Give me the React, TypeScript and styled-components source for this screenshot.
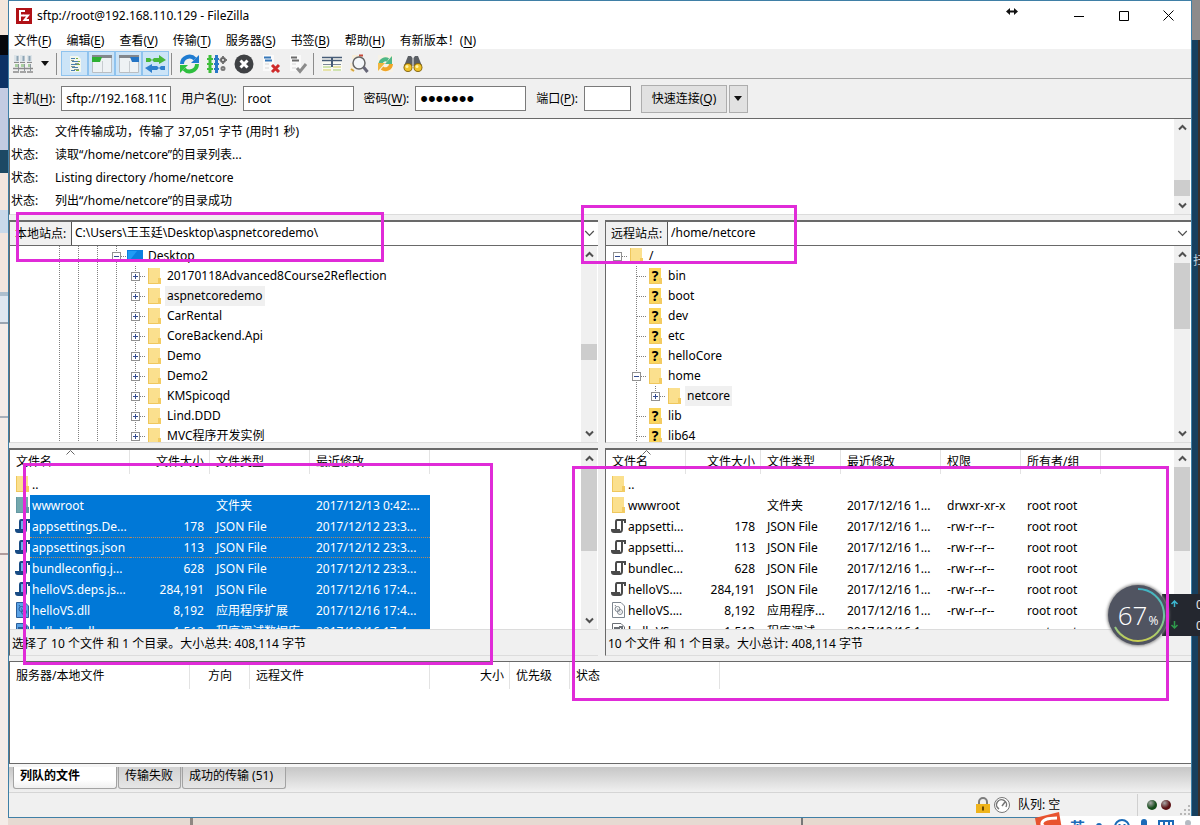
import React from 'react';
import styled, { createGlobalStyle, css } from 'styled-components';

const LINE = '#696969';
const FACE = '#f0f0f0';
const MARK = '#e02bd8';

const Global = createGlobalStyle`
  * { box-sizing: border-box; }
  html, body { margin: 0; height: 100%; }
  body {
    font: 12px/16px "Noto Sans", "Noto Sans CJK SC", sans-serif;
    color: #000;
    overflow: hidden;
  }
  button, input, table { font: inherit; color: inherit; }
  button { border: 0; padding: 0; background: none; }
  u { text-underline-offset: 2px; }
`;

/* ---------- desktop and window frame ---------- */

const Desktop = styled.div`
  position: relative;
  height: 100vh;
  padding: 0 8px 7px;
  overflow: hidden;
  background:
    linear-gradient(#8d8b8b 0 40px, transparent 40px) right / 8px 100% no-repeat,
    linear-gradient(to right, #17405f 6px, #3b302c 6px) right / 8px 100% no-repeat,
    linear-gradient(#f3e6dc 0 35px, #05070c 35px 55px, #0c3265 55px 88px, #c3cbe2 88px 150px,
      #1d4964 150px 173px, #f2e5de 173px 210px, #c9d9ea 210px 233px, #f2e5de 233px 292px,
      #aebfce 292px 296px, #dfe7f0 296px 322px, #9aa4b0 322px 324px, #f4ece8 324px 416px,
      #a8b0ba 416px 418px, #f4ece8 418px 553px, #b09c9c 553px 555px, #f4ece8 555px) left / 8px 100% no-repeat,
    linear-gradient(to right, transparent 190px, #8f8782 190px 193px, transparent 193px 801px,
      #777 801px 803px, #e6d9cf 803px) bottom / 100% 7px no-repeat,
    #e6dad2;
`;

const Window = styled.main`
  display: flex;
  flex-direction: column;
  height: 100%;
  background: ${FACE};
  border: 1px solid #3f7fa6;
`;

const TitleBar = styled.header`
  display: flex;
  align-items: center;
  flex: none;
  height: 29px;
  padding-left: 7px;
  gap: 5px;
  background: #fff;
`;

const Title = styled.h1`
  flex: 1;
  margin: 0;
  font-size: 12px;
  line-height: 16px;
  font-weight: 400;
`;

const Captions = styled.div`
  display: flex;
`;

const Caption = styled.button`
  display: grid;
  place-items: center;
  width: 45px;
  height: 29px;
`;

const MenuBar = styled.nav`
  display: flex;
  flex: none;
  align-items: flex-end;
  height: 19px;
  background: #fff;
`;

const MenuItem = styled.button`
  padding: 0 0 0 5px;
  margin-right: 10px;
  white-space: nowrap;
`;

const ToolBar = styled.div`
  display: flex;
  align-items: center;
  flex: none;
  height: 30px;
  border-bottom: 1px solid #a0a0a0;
`;

const Tool = styled.button<{ $on?: boolean; $slim?: boolean }>`
  display: grid;
  place-items: center;
  width: ${(p) => (p.$slim ? 18 : 27)}px;
  height: 25px;
  ${(p) => p.$on && css`background: #cce4f7; border: 1px solid #8fc3ee;`}
`;

const ToolSep = styled.span`
  width: 1px;
  height: 22px;
  margin: 0 4px 0 2px;
  background: #8c8c8c;
`;

/* ---------- quick connect ---------- */

const QuickBar = styled.form`
  display: flex;
  align-items: center;
  flex: none;
  height: 40px;
  padding: 0 3px;
  gap: 10px;
  border-bottom: 1px solid ${LINE};
`;

const Field = styled.label`
  display: flex;
  align-items: center;
  gap: 6px;
  white-space: nowrap;
`;

const TextBox = styled.input<{ $w: number }>`
  width: ${(p) => p.$w}px;
  height: 25px;
  padding: 0 4px;
  background: #fff;
  border: 1px solid #7a7a7a;
  outline: 0;

  &[type='password'] { font: 22px/22px "Liberation Sans", sans-serif; }
`;

const ConnectGroup = styled.div`
  display: flex;
  gap: 2px;
`;

const PushButton = styled.button<{ $w: number }>`
  display: grid;
  place-items: center;
  width: ${(p) => p.$w}px;
  height: 28px;
  background: #e1e1e1;
  border: 1px solid #adadad;
`;

/* ---------- scroll bar ---------- */

const Track = styled.div`
  display: flex;
  flex-direction: column;
  flex: none;
  width: 17px;
  background: ${FACE};
  border-right: 1px solid #fff;
`;

const ScrollEnd = styled.button`
  display: grid;
  place-items: center;
  height: 17px;
`;

const Rail = styled.div<{ $before: number; $after: number }>`
  display: grid;
  flex: 1;
  min-height: 0;
  grid-template-rows: ${(p) => p.$before}fr minmax(16px, ${(p) => 100 - p.$before - p.$after}fr) ${(p) => p.$after}fr;
`;

const Thumb = styled.div`
  grid-row: 2;
  background: #cdcdcd;
`;

function Chevron({ up, size = 9 }: { up?: boolean; size?: number }) {
  return (
    <svg width={size} height={size} viewBox="0 0 9 9" fill="none" stroke="#505050" strokeWidth={size > 9 ? 1 : 2}>
      <path d={up ? 'M1 6.5 4.5 3 8 6.5' : 'M1 2.5 4.5 6 8 2.5'} />
    </svg>
  );
}

function ScrollBar({ before, after }: { before: number; after: number }) {
  return (
    <Track>
      <ScrollEnd aria-label="向上滚动"><Chevron up /></ScrollEnd>
      <Rail $before={before} $after={after}><Thumb /></Rail>
      <ScrollEnd aria-label="向下滚动"><Chevron /></ScrollEnd>
    </Track>
  );
}

/* ---------- message log ---------- */

const Log = styled.section`
  display: flex;
  flex: 95 1 0;
  min-height: 0;
  background: #fff;
  border-left: 1px solid ${LINE};
  border-bottom: 1px solid #dcdcdc;
`;

const LogLines = styled.div`
  flex: 1;
  overflow: hidden;
  padding: 1px;
`;

const LogLine = styled.p`
  display: grid;
  grid-template-columns: 44px 1fr;
  margin: 0;
  line-height: 23px;
`;

/* ---------- site panes ---------- */

const Split = styled.div<{ $weight: number }>`
  display: grid;
  grid-template-columns: calc(50% - 2px) 1fr;
  grid-template-rows: minmax(0, 1fr);
  column-gap: 7px;
  flex: ${(p) => p.$weight} 1 0;
  min-height: 0;
  margin-top: 5px;
`;

const Pane = styled.section`
  display: flex;
  flex-direction: column;
  min-width: 0;
  background: #fff;
  border: solid ${LINE};
  border-width: 2px 0 0 1px;
  border-bottom: 1px solid #dcdcdc;
`;

const AddressRow = styled.div`
  display: flex;
  height: 24px;
  flex: none;
  border-bottom: 1px solid ${LINE};
`;

const AddressLabel = styled.label`
  width: 62px;
  padding-left: 5px;
  line-height: 23px;
  white-space: nowrap;
  background: ${FACE};
  border-right: 1px solid #555;
`;

const AddressInput = styled.input`
  flex: 1;
  min-width: 0;
  padding: 0 3px;
  border: 0;
  outline: 0;
  background: #fff;
`;

const DropButton = styled.button`
  display: grid;
  place-items: center;
  width: 17px;
`;

const PaneBody = styled.div`
  display: flex;
  flex: 1;
  min-height: 0;
`;

const Tree = styled.ul<{ $pad: number }>`
  flex: 1;
  margin: 0;
  padding: 0 0 0 ${(p) => p.$pad}px;
  overflow: hidden;
  list-style: none;
`;

const TreeRow = styled.li`
  display: flex;
  height: 20px;
  align-items: center;
`;

const TreeLabel = styled.span<{ $on?: boolean }>`
  padding: 0 2px;
  line-height: 20px;
  white-space: nowrap;
  background: ${(p) => (p.$on ? '#f0f0f0' : 'none')};
`;

const IconSlot = styled.span`
  display: grid;
  place-items: center;
  width: 20px;
  height: 20px;
  padding-right: 1px;
`;

type Kind = 'guide' | 'plus' | 'minus' | 'leaf' | 'none' | 'plusFirst' | 'minusMid';

function Branch({ kind }: { kind: Kind }) {
  const box = kind === 'plus' || kind === 'minus' || kind === 'plusFirst' || kind === 'minusMid';
  return (
    <svg width="19" height="20" viewBox="0 0 19 20" fill="none">
      <g stroke="#808080" strokeDasharray="1 1">
        {kind !== 'none' && kind !== 'plusFirst' && kind !== 'minus' && <path d="M9.5 0V20" />}
        {kind === 'plusFirst' && <path d="M9.5 0V6" />}
        {kind !== 'none' && kind !== 'guide' && <path d="M10 10.5H19" />}
      </g>
      {box && (
        <>
          <rect x="5.5" y="6.5" width="8" height="8" fill="#fff" stroke="#919191" />
          <path d="M7 10.5H12" stroke="#334b8f" />
          {(kind === 'plus' || kind === 'plusFirst') && <path d="M9.5 8V13" stroke="#334b8f" />}
        </>
      )}
    </svg>
  );
}

const FolderArt = styled.svg`
  overflow: visible;
`;

function Folder({ unknown, tinted }: { unknown?: boolean; tinted?: boolean }) {
  return (
    <FolderArt width="13" height="16" viewBox="0 0 13 16">
      <path d="M0 0H12V10H13V16H0Z" fill={tinted ? '#73a8ad' : unknown ? '#fbd65c' : '#fbe08e'} />
      <path d="M0 0H1V16H0ZM0 15H13V16H0Z" fill={tinted ? '#6397a3' : '#efc75c'} />
      <path d="M10 10H13V16H10Z" fill={tinted ? '#6397a3' : '#f3cb61'} />
      {unknown && (
        <text x="6" y="13" textAnchor="middle" fontSize="14" fontWeight="700">?</text>
      )}
    </FolderArt>
  );
}

function DesktopIcon() {
  return (
    <svg width="17" height="16" viewBox="0 0 17 16">
      <path d="M0 2H16V13H0Z" fill="#0a7fe0" />
      <path d="M1 3H10L3 12H1Z" fill="#1f9cf5" />
      <path d="M0 13H16V14H0Z" fill="#0761ae" />
    </svg>
  );
}

/* ---------- file lists ---------- */

const ListWrap = styled.div`
  flex: 1;
  min-width: 0;
  overflow: hidden;
`;

const Files = styled.table`
  table-layout: fixed;
  width: 0;
  border-collapse: separate;
  border-spacing: 0;
`;

const Head = styled.th<{ $align?: string }>`
  position: relative;
  height: 24px;
  padding: 0 5px 0 6px;
  font-weight: 400;
  text-align: ${(p) => p.$align || 'left'};
  white-space: nowrap;
  border-right: 1px solid #e3e3e3;
`;

const SortMark = styled.span`
  position: absolute;
  top: 0;
  left: calc(50% - 4px);
  display: block;
  line-height: 0;
`;

const Cell = styled.td<{ $align?: string }>`
  height: 21px;
  padding: 1px 6px 0;
  white-space: nowrap;
  overflow: hidden;
  text-align: ${(p) => p.$align || 'left'};
`;

const NameCell = styled.td`
  height: 21px;
  padding: 0 0 0 5px;
`;

const NameBox = styled.span`
  display: flex;
  height: 21px;
`;

const NameText = styled.span`
  display: flex;
  align-items: center;
  flex: 1;
  padding: 1px 0 0 2px;
  white-space: nowrap;
`;

const FileIcon = styled.span`
  display: grid;
  place-items: center;
  width: 15px;
`;

const FileRow = styled.tr<{ $selected?: boolean; $focus?: boolean }>`
  ${(p) => p.$selected && css`
    color: #fff;
    ${Cell}, ${NameText} { background: #0078d7; }
  `}
  ${(p) => p.$focus && css`
    ${Cell}, ${NameText} { border: dotted #b98a5c; border-width: 1px 0; }
  `}
`;

const PaneStatus = styled.p`
  flex: none;
  height: 26px;
  margin: 0;
  padding: 0 2px;
  line-height: 27px;
  background: ${FACE};
  border-top: 1px solid #dcdcdc;
`;

function Script({ tinted }: { tinted?: boolean }) {
  const ink = tinted ? '#174b84' : '#4a4a4a';
  return (
    <svg width="15" height="16" viewBox="0 0 15 16" fill="none" stroke={ink} strokeWidth="2">
      <path d="M5 3H11V12H5Z" fill={tinted ? '#6fb1ec' : '#fff'} stroke="none" />
      <path d="M14 5V2H6Q5 2 5 4V11" />
      <path d="M11 3V11Q11 14 9 14H3Q1 14 1 12H8V14" />
    </svg>
  );
}

function Library({ tinted }: { tinted?: boolean }) {
  const ink = tinted ? '#2a5f9b' : '#7f8790';
  return (
    <svg width="13" height="16" viewBox="0 0 13 16" fill="none" stroke={ink}>
      <path d="M.5.5H9L12.500 4V15.500H.5Z" fill={tinted ? '#5aa2e6' : '#fff'} />
      <circle cx="5.500" cy="7" r="2.500" />
      <circle cx="8" cy="10" r="2.500" />
      <path d="M5 7H6M7.500 10H8.500M3 3 4 4.500" />
    </svg>
  );
}

function Database({ tinted }: { tinted?: boolean }) {
  const ink = tinted ? '#2a5f9b' : '#6b6f75';
  return (
    <svg width="13" height="16" viewBox="0 0 13 16" fill="none" stroke={ink}>
      <path d="M.5.5H9L12.500 4V15.500H.5Z" fill={tinted ? '#5aa2e6' : '#fff'} />
      <path d="M3 5H7V9H3ZM7 4H10V8" strokeWidth="2" />
    </svg>
  );
}

type Glyph = 'folder' | 'script' | 'library' | 'database';
type Entry = { icon: Glyph; cells: string[]; selected?: boolean; focus?: boolean };
type Column = { label: string; width: number; align?: string };

function Icon({ kind, tinted }: { kind: Glyph; tinted?: boolean }) {
  if (kind === 'folder') return <Folder tinted={tinted} />;
  if (kind === 'script') return <Script tinted={tinted} />;
  if (kind === 'library') return <Library tinted={tinted} />;
  return <Database tinted={tinted} />;
}

function FileList({ columns, rows }: { columns: Column[]; rows: Entry[] }) {
  return (
    <ListWrap>
      <Files>
        <colgroup>
          {columns.map((c) => <col key={c.label} style={{ width: c.width }} />)}
        </colgroup>
        <thead>
          <tr>
            {columns.map((c, i) => (
              <Head key={c.label} $align={c.align}>
                {c.label}
                {i === 0 && (
                  <SortMark>
                    <svg width="9" height="5" viewBox="0 0 9 5" fill="none" stroke="#666"><path d="M.5 4.500 4.500.5 8.500 4.500" /></svg>
                  </SortMark>
                )}
              </Head>
            ))}
          </tr>
        </thead>
        <tbody>
          {rows.map((r, i) => (
            <FileRow key={i} $selected={r.selected} $focus={r.focus}>
              <NameCell>
                <NameBox>
                  <FileIcon><Icon kind={r.icon} tinted={r.selected} /></FileIcon>
                  <NameText>{r.cells[0]}</NameText>
                </NameBox>
              </NameCell>
              {columns.slice(1).map((c, j) => <Cell key={c.label} $align={c.align}>{r.cells[j + 1]}</Cell>)}
            </FileRow>
          ))}
        </tbody>
      </Files>
    </ListWrap>
  );
}

/* ---------- queue, tabs and status ---------- */

const Queue = styled.section`
  flex: 101 1 0;
  min-height: 0;
  margin-top: 5px;
  overflow: hidden;
  background: #fff;
  border: solid ${LINE};
  border-width: 1px 0 1px 1px;
`;

const QueueHead = styled(Head)`
  height: 27px;
`;

const Tabs = styled.div`
  display: flex;
  flex: none;
  align-items: flex-start;
  gap: 1px;
  height: 29px;
  padding: 0 4px;
  border-top: 3px solid #f6f6f6;
  border-bottom: 1px solid #d5d5d5;
  background: linear-gradient(#c6c6c6, #f0f0f0);
`;

const Tab = styled.button<{ $active?: boolean; $w: number }>`
  width: ${(p) => p.$w}px;
  height: 22px;
  padding: 0 0 2px 6px;
  text-align: left;
  white-space: nowrap;
  font-weight: ${(p) => (p.$active ? 700 : 400)};
  background: ${(p) => (p.$active ? 'linear-gradient(#fff 60%, #f0f0f0)' : 'linear-gradient(#d2d2d2, #e6e6e6)')};
  border: 1px solid #a3a3a3;
  border-top: 0;
  border-radius: 0 0 3px 3px;
`;

const StatusBar = styled.footer`
  display: flex;
  flex: none;
  align-items: center;
  justify-content: flex-end;
  gap: 3px;
  height: 24px;
`;

const QueueState = styled.span`
  width: 121px;
  padding-left: 5px;
`;

const Lamps = styled.span`
  display: flex;
  align-items: center;
  gap: 4px;
  height: 22px;
  padding: 0 0 0 9px;
  border-left: 1px solid #d0d0d0;
`;

const Lamp = styled.span<{ $c: string }>`
  width: 10px;
  height: 10px;
  border-radius: 50%;
  background: radial-gradient(circle at 35% 30%, #a8a8a8, ${(p) => p.$c} 55%);
`;

/* ---------- overlays ---------- */

const Frame = styled.div<{ $x: number; $y: number; $w: number; $h: number }>`
  position: absolute;
  left: ${(p) => p.$x}px;
  top: ${(p) => p.$y}px;
  width: ${(p) => p.$w}px;
  height: ${(p) => p.$h}px;
  border: 3px solid ${MARK};
  pointer-events: none;
`;

const ResizeCursor = styled.span`
  position: absolute;
  top: 7px;
  right: 182px;
  line-height: 0;
`;

const Speed = styled.aside`
  position: absolute;
  top: 594px;
  right: 0;
  display: grid;
  grid-template-columns: 26px 1fr;
  align-items: center;
  width: 38px;
  height: 42px;
  padding-left: 8px;
  line-height: 21px;
  color: #e8e8e8;
  background: #24272f;
  overflow: hidden;
`;

const SpeedArrows = styled.span`
  line-height: 0;
`;

const Ball = styled.div`
  position: absolute;
  top: 585px;
  right: 32px;
  display: flex;
  align-items: center;
  justify-content: center;
  width: 60px;
  height: 60px;
  border-radius: 50%;
  color: #fff;
  font-family: "Open Sans", sans-serif;
  font-size: 26px;
  font-weight: 300;
  background: #505461;
  box-shadow: 0 0 3px 1px #8a8a8a;

  svg { position: absolute; inset: 0; }
  small { font-size: 12px; padding: 12px 0 0 1px; font-weight: 400; }
`;

const EdgeText = styled.span`
  position: absolute;
  top: 253px;
  left: calc(100% - 7px);
  color: #c4d3df;
`;

const ImeBar = styled.div`
  position: absolute;
  right: 0;
  bottom: -12px;
  display: flex;
  align-items: center;
  gap: 11px;
  width: 155px;
  height: 21px;
  padding-left: 25px;
  color: #1c6bb8;
  font-size: 15px;
  font-weight: 700;
  background: #fff;

  svg { flex: none; }
`;

const ImeLogo = styled.span`
  position: absolute;
  left: -10px;
  top: -5px;
  line-height: 0;
`;

/* ---------- data ---------- */

const MENUS: [string, string][] = [
  ['文件', 'F'], ['编辑', 'E'], ['查看', 'V'], ['传输', 'T'],
  ['服务器', 'S'], ['书签', 'B'], ['帮助', 'H'], ['有新版本！', 'N'],
];

const LOG = [
  '文件传输成功，传输了 37,051 字节 (用时1 秒)',
  '读取“/home/netcore”的目录列表...',
  'Listing directory /home/netcore',
  '列出“/home/netcore”的目录成功',
];

const LOCAL_DIRS = [
  '20170118Advanced8Course2Reflection', 'aspnetcoredemo', 'CarRental', 'CoreBackend.Api', 'Demo',
  'Demo2', 'KMSpicoqd', 'Lind.DDD', 'MVC程序开发实例',
];

const REMOTE_DIRS: { name: string; branch: Kind[]; unknown?: boolean; on?: boolean }[] = [
  { name: '/', branch: ['minus'] },
  ...['bin', 'boot', 'dev', 'etc', 'helloCore'].map((name) => ({ name, branch: ['none', 'leaf'] as Kind[], unknown: true })),
  { name: 'home', branch: ['none', 'minusMid'] },
  { name: 'netcore', branch: ['none', 'guide', 'plusFirst'], on: true },
  { name: 'lib', branch: ['none', 'leaf'], unknown: true },
  { name: 'lib64', branch: ['none', 'leaf'], unknown: true },
];

const LOCAL_COLS: Column[] = [
  { label: '文件名', width: 120 }, { label: '文件大小', width: 80, align: 'right' },
  { label: '文件类型', width: 100 }, { label: '最近修改', width: 120 },
];

const REMOTE_COLS: Column[] = [
  { label: '文件名', width: 80 }, { label: '文件大小', width: 75, align: 'right' }, { label: '文件类型', width: 80 },
  { label: '最近修改', width: 100 }, { label: '权限', width: 80 }, { label: '所有者/组', width: 80 },
];

const LOCAL_FILES: Entry[] = [
  { icon: 'folder', cells: ['..'] },
  { icon: 'folder', selected: true, cells: ['wwwroot', '', '文件夹', '2017/12/13 0:42:...'] },
  { icon: 'script', selected: true, cells: ['appsettings.De...', '178', 'JSON File', '2017/12/12 23:3...'] },
  { icon: 'script', selected: true, focus: true, cells: ['appsettings.json', '113', 'JSON File', '2017/12/12 23:3...'] },
  { icon: 'script', selected: true, cells: ['bundleconfig.j...', '628', 'JSON File', '2017/12/12 23:3...'] },
  { icon: 'script', selected: true, cells: ['helloVS.deps.js...', '284,191', 'JSON File', '2017/12/16 17:4...'] },
  { icon: 'library', selected: true, cells: ['helloVS.dll', '8,192', '应用程序扩展', '2017/12/16 17:4...'] },
  { icon: 'database', selected: true, cells: ['helloVS.pdb', '1,512', '程序调试数据库', '2017/12/16 17:4...'] },
];

const owner = ['2017/12/16 1...', '-rw-r--r--', 'root root'];
const REMOTE_FILES: Entry[] = [
  { icon: 'folder', cells: ['..'] },
  { icon: 'folder', cells: ['wwwroot', '', '文件夹', '2017/12/16 1...', 'drwxr-xr-x', 'root root'] },
  { icon: 'script', cells: ['appsetti...', '178', 'JSON File', ...owner] },
  { icon: 'script', cells: ['appsetti...', '113', 'JSON File', ...owner] },
  { icon: 'script', cells: ['bundlec...', '628', 'JSON File', ...owner] },
  { icon: 'script', cells: ['helloVS....', '284,191', 'JSON File', ...owner] },
  { icon: 'library', cells: ['helloVS....', '8,192', '应用程序...', ...owner] },
  { icon: 'database', cells: ['helloVS....', '1,512', '程序调试...', ...owner] },
];

const QUEUE_COLS: Column[] = [
  { label: '服务器/本地文件', width: 180 }, { label: '方向', width: 60, align: 'center' }, { label: '远程文件', width: 180 },
  { label: '大小', width: 80, align: 'right' }, { label: '优先级', width: 60 }, { label: '状态', width: 150 },
];

/* ---------- tool bar drawings ---------- */

const Caret = () => <svg width="8" height="5"><path d="M0 0H8L4 5Z" fill="#111" /></svg>;

const SiteManagerIcon = () => (
  <svg width="20" height="20" viewBox="0 0 20 20">
    <path d="M1 1H6V8H1ZM7 1H12V8H7ZM14 1H19V8H14Z" fill="#dde4e8" />
    <path d="M4.500 2V7M10.500 2V7M16.500 2V7" stroke="#8fa5b5" strokeWidth="2" />
    <path d="M2 10H5V13H2ZM8 10H11V13H8ZM15 10H18V13H15Z" fill="#a9cfa0" />
    <path d="M1 8.500H6M7 8.500H12M14 8.500H19" stroke="#8b8b8b" />
    <path d="M5.500 10V17M11.500 10V17M17.500 10V17" stroke="#8f9aa0" />
    <path d="M0 14.500H20M0 18H6M7 18H13M14 18H20" stroke="#8b8b8b" strokeWidth="1.500" />
  </svg>
);
const LogIcon = () => (
  <svg width="18" height="20" viewBox="0 0 18 20">
    <path d="M4 2H12L15 5V18H4Z" fill="#f3f7ee" />
    <path d="M5 4.500H9M6 7.500H12M5 10.500H11M6 13.500H12M5 16.500H9" stroke="#4a7fae" />
    <path d="M10 4.500H12M12 7.500H14M11 10.500H14M10 16.500H13" stroke="#7fb23d" />
    <path d="M5 6.500H8M9 9.500H13M5 12.500H9M8 15.500H13" stroke="#8a9a8a" />
  </svg>
);
const TreeIcon = ({ right }: { right?: boolean }) => (
  <svg width="20" height="18" viewBox="0 0 20 18">
    <path d="M.5.5H19.500V17.500H.5Z" fill="#eef2f4" stroke="#b9bec3" />
    <path d="M0 0H20V3H0Z" fill="#83878c" />
    {right ? <path d="M11 2H20V7H13Z" fill="#2474c4" /> : <path d="M0 2H10L8 7H0Z" fill="#2eb032" />}
    <path d="M10.500 6V17" stroke="#c7ccd0" />
  </svg>
);
const QueueIcon = () => (
  <svg width="21" height="18" viewBox="0 0 21 18">
    <path d="M1 3H5L7 5 9 3H14V0L21 5 14 9V7H9L7 5 5 7H1Z" fill="#46b83b" />
    <path d="M20 11H16L14 13 12 11H7V9L0 13 7 18V15H12L14 13 16 15H20Z" fill="#2f7fcd" />
  </svg>
);
const RefreshIcon = () => (
  <svg width="21" height="20" viewBox="0 0 21 20" fill="none" strokeWidth="4">
    <path d="M3 10A7.500 7.500 0 0 1 16 5" stroke="#1f7bd1" />
    <path d="M20 1V9H12Z" fill="#1f7bd1" />
    <path d="M18 10A7.500 7.500 0 0 1 5 15" stroke="#2ebf3f" />
    <path d="M1 19V11H9Z" fill="#2ebf3f" />
  </svg>
);
const ProcessIcon = () => (
  <svg width="20" height="20" viewBox="0 0 20 20" fill="none">
    <path d="M3 1V19" stroke="#3fbe3a" strokeWidth="3" />
    <path d="M0 5H6M0 10H6M0 15H6" stroke="#3fbe3a" strokeWidth="2" />
    <path d="M9.500 1V19" stroke="#2878c8" strokeWidth="3" />
    <path d="M7 5H12M7 10H12M7 15H12" stroke="#2878c8" strokeWidth="2" />
    <circle cx="16" cy="6" r="2" stroke="#666" strokeWidth="2" />
    <path d="M16 2V3M16 9V10M12.500 6H13M19 6H20" stroke="#777" strokeWidth="2" />
    <circle cx="16" cy="14.500" r="1.500" stroke="#777" strokeWidth="2" />
  </svg>
);
const CancelIcon = () => (
  <svg width="20" height="20" viewBox="0 0 20 20">
    <circle cx="10" cy="10" r="9.500" fill="#3f4144" />
    <path d="M6.500 6.500 13.500 13.500M13.500 6.500 6.500 13.500" stroke="#fff" strokeWidth="3" />
  </svg>
);
const DisconnectIcon = () => (
  <svg width="20" height="20" viewBox="0 0 20 20" fill="none">
    <path d="M2 1H13V17H2Z" fill="#fafafa" />
    <path d="M3 3.500H10M4 6.500H11" stroke="#3577b8" strokeWidth="2" />
    <path d="M4 10H8M4 14H8" stroke="#d6d6d6" />
    <path d="M11 11 18 18M18 11 11 18" stroke="#cf2b2b" strokeWidth="3" />
  </svg>
);
const ReconnectIcon = () => (
  <svg width="20" height="20" viewBox="0 0 20 20" fill="none">
    <path d="M2 1H13V17H2Z" fill="#fafafa" />
    <path d="M3 3.500H9M4 6.500H11" stroke="#6b6b6b" strokeWidth="2" />
    <path d="M4 10H8M4 14H8" stroke="#d6d6d6" />
    <path d="M9 14 12 17.500 18 10" stroke="#8b8b8b" strokeWidth="3" />
  </svg>
);
const FilterIcon = () => (
  <svg width="20" height="18" viewBox="0 0 20 18">
    <path d="M0 2H20V16H0Z" fill="#fafaf4" />
    <path d="M0 2.500H20M0 5.500H20" stroke="#475d78" strokeWidth="1.500" />
    <path d="M1 9.500H19" stroke="#7b8797" />
    <path d="M1 12H9M11 15H19" stroke="#a3cb6c" />
    <path d="M1 15H9M11 12H19" stroke="#d4cc5d" />
    <path d="M10 2V12" stroke="#475d78" strokeWidth="2" />
  </svg>
);
const CompareIcon = () => (
  <svg width="20" height="20" viewBox="0 0 20 20" fill="none">
    <path d="M3 1H13V5H3ZM1 9H5V18H1Z" fill="#f7eedb" />
    <path d="M10 1.500H14" stroke="#c64a3a" strokeWidth="2" />
    <circle cx="10" cy="9" r="6" fill="#f4f7f9" stroke="#666" strokeWidth="1.500" />
    <path d="M14.500 13 18.500 18" stroke="#667" strokeWidth="3" />
    <path d="M2 15 5 17" stroke="#d5a63a" strokeWidth="2" />
  </svg>
);
const SyncIcon = () => (
  <svg width="19" height="18" viewBox="0 0 19 18" fill="none" strokeWidth="4">
    <path d="M2 0H17V17H2Z" fill="#f7f2e6" />
    <path d="M4.500 9A5 5 0 0 1 12 5" stroke="#4fb886" />
    <path d="M16 1V9H9Z" fill="#4fb886" />
    <path d="M15 9A5.500 5.500 0 0 1 6 13" stroke="#f0a527" />
    <path d="M2 16V8H9Z" fill="#f0b63c" />
  </svg>
);
const FindIcon = () => (
  <svg width="20" height="18" viewBox="0 0 20 18">
    <path d="M5 1H8L9.500 3V11H1ZM15 1H12L10.500 3V11H19Z" fill="#5b5f64" />
    <circle cx="5" cy="12.500" r="4.500" fill="#8a6a12" /><circle cx="15" cy="12.500" r="4.500" fill="#8a6a12" />
    <circle cx="5" cy="12.500" r="3.500" fill="#f2c42b" /><circle cx="15" cy="12.500" r="3.500" fill="#f2c42b" />
    <circle cx="4" cy="11.500" r="1.500" fill="#fff3a8" /><circle cx="14" cy="11.500" r="1.500" fill="#fff3a8" />
  </svg>
);

const Key = ({ text, k, tail = '' }: { text: string; k: string; tail?: string }) => (
  <span>{text}(<u>{k}</u>){tail}</span>
);

export default function App() {
  return (
    <Desktop>
      <Global />
      <Window>
        <TitleBar>
          <svg width="16" height="16" viewBox="0 0 16 16">
            <rect width="16" height="16" fill="#b01116" />
            <path d="M4 13V3H9M4 7.500H8" fill="none" stroke="#fff" strokeWidth="2" />
            <path d="M7.500 7.500H12L8.500 12H13" fill="none" stroke="#fff" strokeWidth="2" />
          </svg>
          <Title>sftp://root@192.168.110.129 - FileZilla</Title>
          <Captions>
            <Caption aria-label="最小化"><svg width="10" height="10"><path d="M0 5.500H10" stroke="#000" /></svg></Caption>
            <Caption aria-label="最大化"><svg width="10" height="10"><path d="M.5.5H9.500V9.500H.5Z" fill="none" stroke="#000" /></svg></Caption>
            <Caption aria-label="关闭"><svg width="11" height="11"><path d="M.5.5 10.500 10.500M10.500.5.5 10.500" stroke="#000" /></svg></Caption>
          </Captions>
        </TitleBar>

        <MenuBar>
          {MENUS.map(([text, k]) => <MenuItem key={k}><Key text={text} k={k} /></MenuItem>)}
        </MenuBar>

        <ToolBar>
          <Tool aria-label="站点管理器"><SiteManagerIcon /></Tool>
          <Tool aria-label="站点列表" $slim><Caret /></Tool>
          <ToolSep />
          <Tool aria-label="消息日志" $on><LogIcon /></Tool>
          <Tool aria-label="本地目录树" $on><TreeIcon /></Tool>
          <Tool aria-label="远程目录树" $on><TreeIcon right /></Tool>
          <Tool aria-label="传输队列" $on><QueueIcon /></Tool>
          <ToolSep />
          <Tool aria-label="刷新"><RefreshIcon /></Tool>
          <Tool aria-label="处理队列"><ProcessIcon /></Tool>
          <Tool aria-label="取消"><CancelIcon /></Tool>
          <Tool aria-label="断开连接"><DisconnectIcon /></Tool>
          <Tool aria-label="重新连接"><ReconnectIcon /></Tool>
          <ToolSep />
          <Tool aria-label="过滤"><FilterIcon /></Tool>
          <Tool aria-label="目录对比"><CompareIcon /></Tool>
          <Tool aria-label="同步浏览"><SyncIcon /></Tool>
          <Tool aria-label="搜索"><FindIcon /></Tool>
        </ToolBar>

        <QuickBar onSubmit={(e) => e.preventDefault()}>
          <Field><Key text="主机" k="H" tail=":" /><TextBox $w={110} defaultValue="sftp://192.168.110.129" /></Field>
          <Field><Key text="用户名" k="U" tail=":" /><TextBox $w={111} defaultValue="root" /></Field>
          <Field><Key text="密码" k="W" tail=":" /><TextBox $w={111} type="password" defaultValue="netcore" /></Field>
          <Field><Key text="端口" k="P" tail=":" /><TextBox $w={47} /></Field>
          <ConnectGroup>
            <PushButton $w={86} type="submit"><Key text="快速连接" k="Q" /></PushButton>
            <PushButton $w={19} type="button" aria-label="连接历史"><Caret /></PushButton>
          </ConnectGroup>
        </QuickBar>

        <Log>
          <LogLines>
            {LOG.map((t) => <LogLine key={t}><span>状态:</span><span>{t}</span></LogLine>)}
          </LogLines>
          <ScrollBar before={72} after={1} />
        </Log>

        <Split $weight={224}>
          <Pane>
            <AddressRow>
              <AddressLabel htmlFor="local">本地站点:</AddressLabel>
              <AddressInput id="local" defaultValue={'C:\\Users\\王玉廷\\Desktop\\aspnetcoredemo\\'} />
              <DropButton aria-label="本地路径"><Chevron size={11} /></DropButton>
            </AddressRow>
            <PaneBody>
              <Tree $pad={40}>
                <TreeRow>
                  <Branch kind="guide" /><Branch kind="guide" /><Branch kind="guide" /><Branch kind="minusMid" />
                  <IconSlot><DesktopIcon /></IconSlot><TreeLabel>Desktop</TreeLabel>
                </TreeRow>
                {LOCAL_DIRS.map((d) => (
                  <TreeRow key={d}>
                    <Branch kind="guide" /><Branch kind="guide" /><Branch kind="guide" /><Branch kind="guide" /><Branch kind="plus" />
                    <IconSlot><Folder /></IconSlot><TreeLabel $on={d === 'aspnetcoredemo'}>{d}</TreeLabel>
                  </TreeRow>
                ))}
              </Tree>
              <ScrollBar before={50} after={40} />
            </PaneBody>
          </Pane>
          <Pane>
            <AddressRow>
              <AddressLabel htmlFor="remote">远程站点:</AddressLabel>
              <AddressInput id="remote" defaultValue="/home/netcore" />
              <DropButton aria-label="远程路径"><Chevron size={11} /></DropButton>
            </AddressRow>
            <PaneBody>
              <Tree $pad={2}>
                {REMOTE_DIRS.map((d) => (
                  <TreeRow key={d.name}>
                    {d.branch.map((b, i) => <Branch key={i} kind={b} />)}
                    <IconSlot><Folder unknown={d.unknown} /></IconSlot><TreeLabel $on={d.on}>{d.name}</TreeLabel>
                  </TreeRow>
                ))}
              </Tree>
              <ScrollBar before={0} after={59} />
            </PaneBody>
          </Pane>
        </Split>

        <Split $weight={209}>
          <Pane>
            <PaneBody>
              <FileList columns={LOCAL_COLS} rows={LOCAL_FILES} />
              <ScrollBar before={0} after={42} />
            </PaneBody>
            <PaneStatus>选择了 10 个文件 和 1 个目录。大小总共: 408,114 字节</PaneStatus>
          </Pane>
          <Pane>
            <PaneBody>
              <FileList columns={REMOTE_COLS} rows={REMOTE_FILES} />
              <ScrollBar before={0} after={42} />
            </PaneBody>
            <PaneStatus>10 个文件 和 1 个目录。大小总计: 408,114 字节</PaneStatus>
          </Pane>
        </Split>

        <Queue>
          <Files>
            <colgroup>{QUEUE_COLS.map((c) => <col key={c.label} style={{ width: c.width }} />)}</colgroup>
            <thead>
              <tr>{QUEUE_COLS.map((c) => <QueueHead key={c.label} $align={c.align}>{c.label}</QueueHead>)}</tr>
            </thead>
          </Files>
        </Queue>

        <Tabs>
          <Tab $w={104} $active>列队的文件</Tab>
          <Tab $w={63}>传输失败</Tab>
          <Tab $w={104}>成功的传输 (51)</Tab>
        </Tabs>

        <StatusBar>
          <svg width="16" height="16" viewBox="0 0 16 16">
            <path d="M4 8V5A4 4 0 0 1 12 5V8" fill="none" stroke="#7d7d7d" strokeWidth="2" />
            <path d="M1 7H15V16H1Z" fill="#efb41c" />
            <path d="M8 9.500V13.500" stroke="#6b4700" strokeWidth="2" />
          </svg>
          <svg width="16" height="16" viewBox="0 0 16 16" fill="none" stroke="#777">
            <circle cx="8" cy="8" r="7.500" fill="#fff" />
            <path d="M5 12A5 5 0 1 1 12 10M8 9 11 5" strokeWidth="1.500" />
          </svg>
          <QueueState>队列: 空</QueueState>
          <Lamps><Lamp $c="#164d1c" /><Lamp $c="#5b1114" /></Lamps>
          <svg width="17" height="22" viewBox="3 0 17 22" fill="#b8b8b8">
            <path d="M17 11H19V13H17ZM17 15H19V17H17ZM17 19H19V21H17ZM13 15H15V17H13ZM13 19H15V21H13ZM9 19H11V21H9Z" />
          </svg>
        </StatusBar>
      </Window>

      <ResizeCursor>
        <svg width="12" height="9" viewBox="0 0 12 9"><path d="M0 4.500 4 1V3.500H8V1L12 4.500 8 8V5.500H4V8Z" fill="#111" /></svg>
      </ResizeCursor>
      <EdgeText>扫</EdgeText>
      <Speed>
        <SpeedArrows>
          <svg width="9" height="30" viewBox="0 0 9 30" fill="none" strokeWidth="1.500">
            <path d="M4.500 7V1M1.500 4 4.500 1 7.500 4" stroke="#3cb6cf" />
            <path d="M4.500 21V28M1.500 25 4.500 28 7.500 25" stroke="#2f9a4c" />
          </svg>
        </SpeedArrows>
        <span>0<br />0</span>
      </Speed>
      <Ball>
        <svg width="60" height="60" viewBox="0 0 60 60" fill="none" strokeWidth="2">
          <defs>
            <linearGradient id="ring" x1="0" y1="0" x2="0" y2="1">
              <stop offset="0" stopColor="#3fb4c6" /><stop offset=".6" stopColor="#79c69a" /><stop offset="1" stopColor="#c9cf52" />
            </linearGradient>
          </defs>
          <path d="M30 4A26 26 0 1 1 7 42" stroke="url(#ring)" />
        </svg>
        67<small>%</small>
      </Ball>
      <ImeBar>
        <ImeLogo>
          <svg width="28" height="28" viewBox="0 0 28 28" fill="none">
            <path d="M0 7 24 1 28 24 4 28Z" fill="#e8532f" />
            <path d="M22 7Q8 7 7 12T20 17" stroke="#fff" strokeWidth="3" />
          </svg>
        </ImeLogo>
        <span>英</span>
        <svg width="7" height="15"><circle cx="3" cy="7" r="3" fill="#1c6bb8" /></svg>
        <svg width="16" height="16" fill="none" stroke="#1c6bb8" strokeWidth="2"><circle cx="8" cy="8" r="7" /><path d="M5.500 5V8M10.500 5V8" /></svg>
        <svg width="6" height="16"><rect width="6" height="12" rx="3" fill="#1c6bb8" /></svg>
        <svg width="16" height="14" fill="none" stroke="#1c6bb8" strokeWidth="2"><path d="M1 1H15V13H1ZM6 1V8M11 1V8" /></svg>
        <svg width="6" height="14"><circle cx="3" cy="3" r="3" fill="#b4bac2" /></svg>
      </ImeBar>

      <Frame $x={16} $y={212} $w={368} $h={50} />
      <Frame $x={581} $y={205} $w={216} $h={59} />
      <Frame $x={23} $y={463} $w={470} $h={202} />
      <Frame $x={572} $y={466} $w={597} $h={235} />
    </Desktop>
  );
}
